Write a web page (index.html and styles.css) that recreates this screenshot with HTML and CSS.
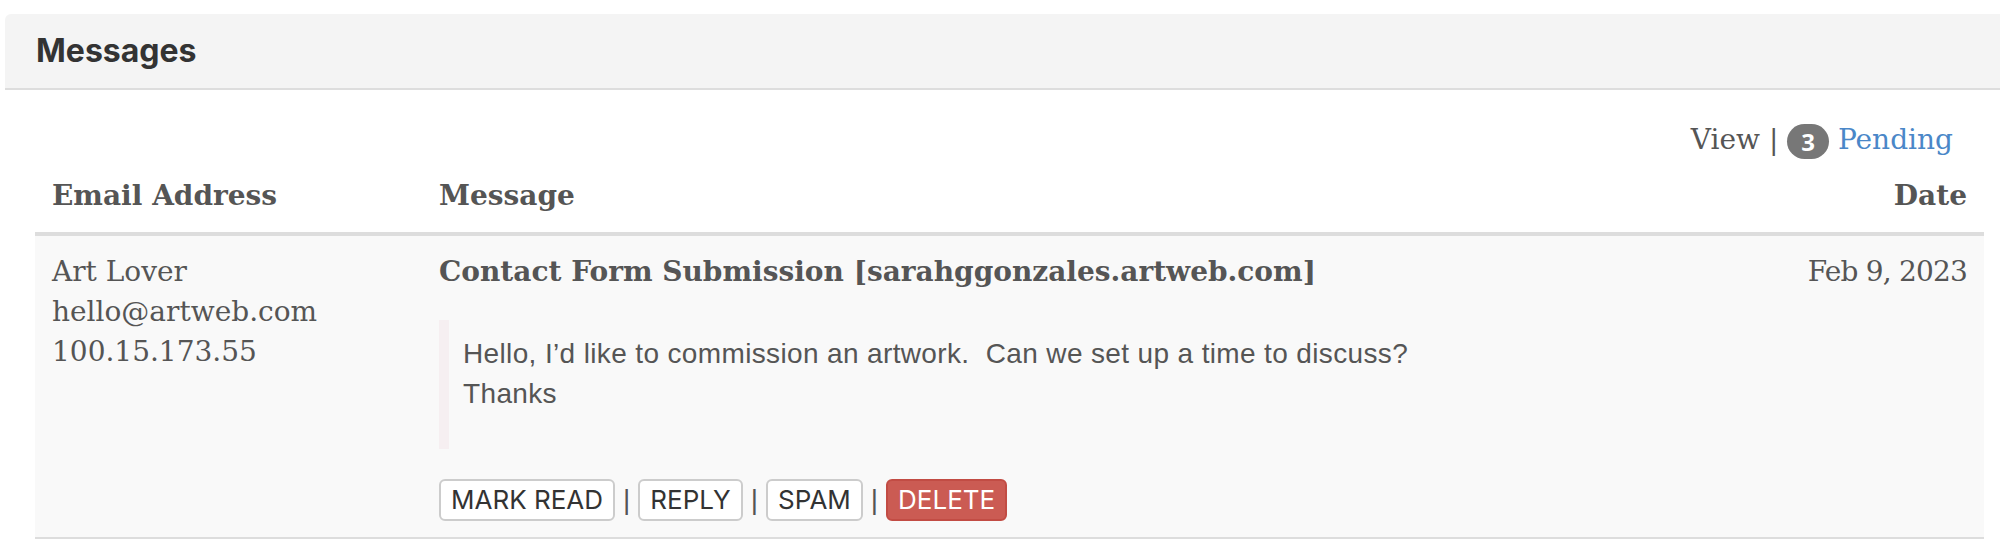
FILE: index.html
```html
<!DOCTYPE html>
<html>
<head>
<meta charset="utf-8">
<title>Messages</title>
<link rel="stylesheet" href="styles.css">
</head>
<body>
<div class="panel">
  <div class="panel-heading"><h3 class="panel-title">Messages</h3></div>
  <div class="panel-body">
    <div class="view-line">View | <span class="badge">3</span> <a class="link" href="#">Pending</a></div>
    <table class="messages">
      <thead>
        <tr>
          <th class="col-email">Email Address</th>
          <th class="col-msg">Message</th>
          <th class="col-date">Date</th>
        </tr>
      </thead>
      <tbody>
        <tr>
          <td class="col-email">Art Lover<br>hello@artweb.com<br>100.15.173.55</td>
          <td class="col-msg">
            <div class="subject">Contact Form Submission [sarahggonzales.artweb.com]</div>
            <blockquote class="body">Hello, I’d like to commission an artwork.&nbsp; Can we set up a time to discuss?<br>Thanks</blockquote>
            <div class="actions">
              <button class="btn">MARK READ</button>
              <span class="sep">|</span>
              <button class="btn">REPLY</button>
              <span class="sep">|</span>
              <button class="btn">SPAM</button>
              <span class="sep">|</span>
              <button class="btn btn-danger">DELETE</button>
            </div>
          </td>
          <td class="col-date">Feb 9, 2023</td>
        </tr>
      </tbody>
    </table>
  </div>
</div>
</body>
</html>
```
FILE: styles.css
```css
html, body {
  margin: 0;
  padding: 0;
  background: #fff;
}
body {
  overflow: hidden;
}
.panel {
  margin: 14px 0 0 5px;
}
.panel-heading {
  background: #f4f4f4;
  border-bottom: 2px solid #ddd;
  border-radius: 6px 0 0 0;
  padding: 20px 30px 20px 31px;
}
.panel-title {
  margin: 0;
  font: 700 32px/34px "Inter", "Open Sans", sans-serif;
  color: #333;
}
.panel-body {
  padding: 30px 16px 0 30px;
}
.view-line {
  text-align: right;
  padding-right: 31px;
  font: 28px/40px "DejaVu Serif", serif;
  color: #555;
}
.badge {
  display: inline-block;
  height: 35px;
  padding: 0 14px;
  border-radius: 18px;
  background: #777;
  color: #fff;
  font: 700 24px/35px "Open Sans", sans-serif;
  vertical-align: middle;
}
.link {
  color: #4a87c8;
  text-decoration: none;
}
.messages {
  width: 100%;
  border-collapse: collapse;
  font: 28px/40px "DejaVu Serif", serif;
  color: #555;
}
.messages th {
  font-weight: 700;
  text-align: left;
  padding: 16px 17px;
  border-bottom: 4px solid #ddd;
  vertical-align: bottom;
}
.messages td {
  padding: 16px 17px;
  vertical-align: top;
  background: #f9f9f9;
  border-bottom: 2px solid #ddd;
}
.col-email {
  width: 353px;
}
.col-date {
  width: 200px;
}
.messages th.col-date,
.messages td.col-date {
  text-align: right;
}
.messages td.col-date {
  letter-spacing: -0.8px;
}
.subject {
  font-weight: 700;
}
.body {
  margin: 28px 0 0 0;
  padding: 14px 0 35px 14px;
  border-left: 10px solid #f6eff1;
  font: 28px/40px "Liberation Sans", Arial, sans-serif;
  letter-spacing: 0.36px;
  color: #555;
}
.actions {
  margin-top: 30px;
  display: flex;
  align-items: center;
  gap: 8px;
}
.btn {
  box-sizing: border-box;
  height: 42px;
  padding: 0 10px;
  border: 2px solid #ccc;
  border-radius: 6px;
  background: #fff;
  color: #333;
  font: 26px/1 "Inter", sans-serif;
  cursor: pointer;
}
.btn-danger {
  background: #cb5b53;
  border-color: #c24c44;
  color: #fff;
}
.sep {
  font: 28px/1 "Liberation Sans", sans-serif;
  color: #555;
}
```
